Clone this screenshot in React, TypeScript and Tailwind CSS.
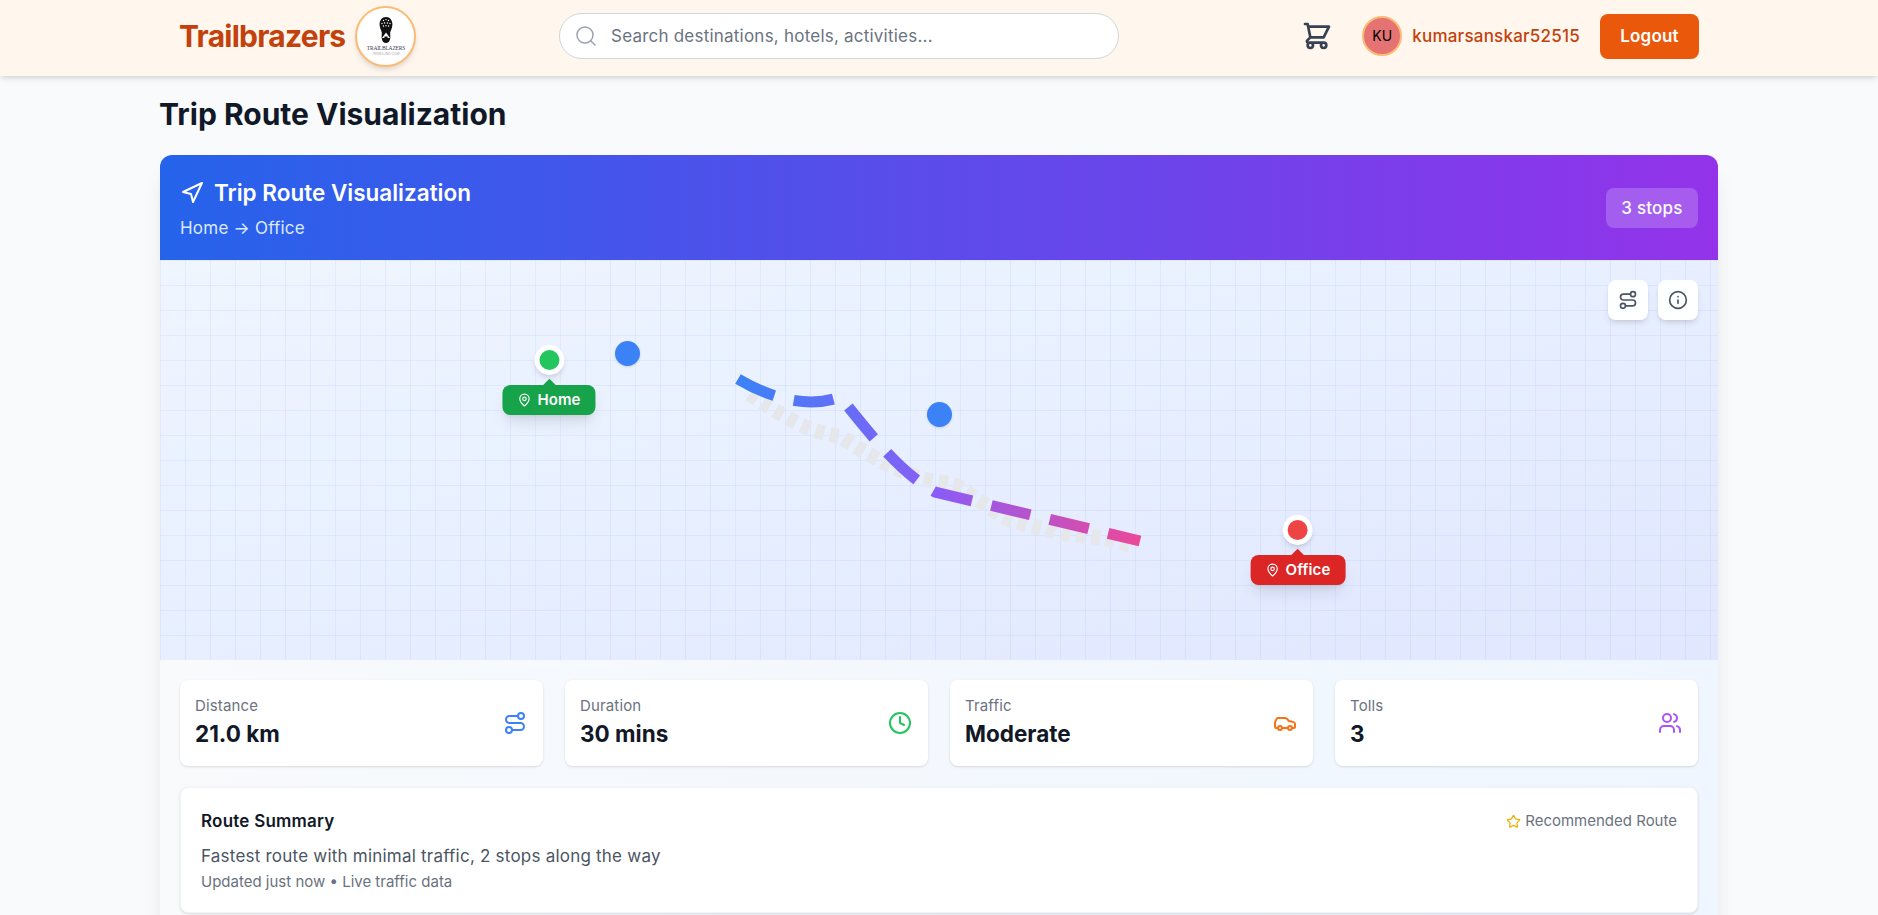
import { Car, Clock, Info, MapPin, Navigation, Route, Search, Star, Users } from "lucide-react";
import { HiOutlineShoppingCart } from "react-icons/hi";
import type { ReactNode } from "react";

const stats = [
  { label: "Distance", value: "21.0 km", icon: <Route size={24} className="text-[#3b82f6]" /> },
  { label: "Duration", value: "30 mins", icon: <Clock size={24} className="text-[#22c55e]" /> },
  { label: "Traffic", value: "Moderate", icon: <Car size={24} className="text-[#f97316]" /> },
  { label: "Tolls", value: "3", icon: <Users size={24} className="text-[#a855f7]" /> },
];

function BootLogo() {
  return (
    <svg width="14" height="26" viewBox="0 0 14 26" className="shrink-0">
      <path d="M7 0C11 0 13.6 3.5 13.4 8C13.2 11.5 11.6 13.5 11.2 15.5C11 17 11.6 19 11.2 21.5C10.8 24.5 9 26 7 26C5 26 3.2 24.5 2.8 21.5C2.4 19 3 17 2.8 15.5C2.4 13.5 .8 11.5 .6 8C.4 3.5 3 0 7 0Z" fill="#111" />
      <g fill="#fff">
        <circle cx="4.5" cy="3.5" r=".7" />
        <circle cx="7" cy="2.6" r=".7" />
        <circle cx="9.5" cy="3.5" r=".7" />
        <circle cx="3" cy="6.5" r=".7" />
        <circle cx="5.6" cy="6" r=".7" />
        <circle cx="8.4" cy="6" r=".7" />
        <circle cx="11" cy="6.5" r=".7" />
        <circle cx="4.4" cy="9" r=".7" />
        <circle cx="7" cy="8.8" r=".7" />
        <circle cx="9.6" cy="9" r=".7" />
        <path d="M7 15.5L11 21H8.6V19.6H5.4V21H3Z" />
      </g>
    </svg>
  );
}

function Pin({ label, className, dot, tone }: { label: string; className: string; dot: string; tone: string }) {
  return (
    <div className={`absolute flex -translate-x-1/2 flex-col items-center ${className}`}>
      <div className="flex h-[30px] w-[30px] items-center justify-center rounded-full bg-white shadow-md">
        <div className={`h-5 w-5 rounded-full ${dot}`} />
      </div>
      <div className={`relative mt-[10px] flex h-[30px] items-center gap-1.5 rounded-lg px-[15px] text-[15px] font-semibold tracking-[0.1px] text-white shadow-lg ${tone}`}>
        <div className={`absolute -top-[4px] left-1/2 h-[11px] w-[11px] -translate-x-1/2 rotate-45 ${tone}`} />
        <MapPin size={14} className="relative" />
        <span className="relative">{label}</span>
      </div>
    </div>
  );
}

function MapButton({ children }: { children: ReactNode }) {
  return (
    <button className="flex h-10 w-10 items-center justify-center rounded-lg bg-white/95 text-[#4b5563] shadow-md">
      {children}
    </button>
  );
}

function RouteLines() {
  return (
    <svg viewBox="0 0 1558 400" className="absolute inset-0 h-full w-full">
      <defs>
        <linearGradient id="routeGrad" gradientUnits="userSpaceOnUse" x1="578" y1="0" x2="980" y2="0">
          <stop offset="0" stopColor="#3b82f6" />
          <stop offset="0.5" stopColor="#8b5cf6" />
          <stop offset="1" stopColor="#ec4899" />
        </linearGradient>
      </defs>
      <path
        d="M590 134C605 145 630 160 650 169C665 174 672 175 680 176C700 190 730 208 763 219C772 221 785 222 795 225C805 230 830 250 850 260C865 265 880 267 896 272C910 275 930 277 943 278C950 280 960 283 970 285"
        fill="none"
        stroke="#e5e7eb"
        strokeWidth="15"
        strokeDasharray="9 6"
      />
      <path
        d="M578 119C605 135 645 150 680 137C700 160 735 210 775 232L980 281"
        fill="none"
        stroke="url(#routeGrad)"
        strokeWidth="11"
        strokeDasharray="40 20"
      />
    </svg>
  );
}

export default function App() {
  return (
    <div className="h-screen overflow-hidden bg-[#f9fafb] text-[17px] leading-6 tracking-[0.22px] [font-family:Inter,sans-serif]">
      <header className="relative z-10 flex h-[76px] items-center bg-[#fff7ed] pb-1 pl-[179px] pr-[179px] shadow-md">
        <div className="flex w-[380px] items-center gap-[10px]">
          <span className="text-[30px] font-bold tracking-[-0.75px] text-[#c2410c]">Trailbrazers</span>
          <div className="flex h-[61px] w-[61px] flex-col items-center justify-center rounded-full border-2 border-[#fdba74] bg-white shadow-md">
            <BootLogo />
            <span className="mt-[2px] text-[5.5px] leading-[7px] tracking-[-0.2px] text-[#374151] [font-family:'Liberation_Serif',serif]">TRAILBLAZERS</span>
            <span className="text-[3px] leading-[4px] tracking-normal text-[#9ca3af]">TRAVELLING CLUB</span>
          </div>
        </div>
        <div className="relative h-[46px] w-[560px]">
          <Search size={24} strokeWidth={1.5} className="absolute left-[15px] top-[11px] text-[#9ca3af]" />
          <input
            readOnly
            placeholder="Search destinations, hotels, activities..."
            className="h-full w-full rounded-full border border-[#d1d5db] bg-white pl-[51px] pr-4 outline-none placeholder:text-[#6b7280]"
          />
        </div>
        <div className="ml-auto flex items-center">
          <HiOutlineShoppingCart size={32} className="text-[#374151]" />
          <div className="ml-[29px] flex h-10 w-10 items-center justify-center rounded-full border-2 border-[#fdba74] bg-[#e57373] text-sm tracking-normal text-black">KU</div>
          <span className="ml-[10px] font-medium text-[#c2410c]">kumarsanskar52515</span>
          <button className="ml-5 h-[45px] w-[99px] rounded-lg bg-[#ea580c] font-semibold text-white">Logout</button>
        </div>
      </header>

      <main className="mx-auto max-w-[1558px] pt-5">
        <h1 className="-ml-px mb-[23px] text-3xl font-bold tracking-normal text-[#111827]">Trip Route Visualization</h1>

        <section className="overflow-hidden rounded-t-xl bg-white shadow-xl">
          <div className="flex h-[105px] items-center justify-between bg-[linear-gradient(to_right,#2563eb,#9333ea)] px-5 text-white">
            <div className="pt-px">
              <div className="flex items-center gap-2.5">
                <Navigation size={24} />
                <h2 className="text-[22.5px] font-semibold leading-8 tracking-normal">Trip Route Visualization</h2>
              </div>
              <p className="mt-[7px] text-[#dbeafe]">Home → Office</p>
            </div>
            <div className="flex h-10 w-[92px] items-center justify-center rounded-lg bg-white/20 font-medium">3 stops</div>
          </div>

          <div className="relative h-[400px] bg-[linear-gradient(to_bottom_right,#eff6ff,#e0e7ff)]">
            <div className="absolute inset-0 bg-[linear-gradient(to_right,rgba(59,130,246,0.08)_1px,transparent_1px),linear-gradient(to_bottom,rgba(59,130,246,0.08)_1px,transparent_1px)] bg-[size:25px_25px]" />
            <RouteLines />
            <div className="absolute left-[455px] top-[81px] h-[25px] w-[25px] rounded-full bg-[#3b82f6] shadow-sm" />
            <div className="absolute left-[767px] top-[142px] h-[25px] w-[25px] rounded-full bg-[#3b82f6] shadow-sm" />
            <Pin label="Home" className="left-[389px] top-[85px]" dot="bg-[#22c55e]" tone="bg-[#16a34a]" />
            <Pin label="Office" className="left-[1138px] top-[255px]" dot="bg-[#ef4444]" tone="bg-[#dc2626]" />
            <div className="absolute right-5 top-5 flex gap-2.5">
              <MapButton><Route size={20} /></MapButton>
              <MapButton><Info size={20} /></MapButton>
            </div>
          </div>

          <div className="bg-[linear-gradient(to_right,#f8fafc,#eff6ff)] p-5">
            <div className="mb-[21px] grid grid-cols-4 gap-[22px]">
              {stats.map((s) => (
                <div key={s.label} className="flex items-center justify-between rounded-lg bg-white pb-4 pl-[15px] pr-4 pt-4 shadow-sm">
                  <div>
                    <p className="text-[15px] leading-5 tracking-[0.15px] text-[#6b7280]">{s.label}</p>
                    <p className="mt-[2px] text-[22.5px] font-bold leading-8 tracking-normal text-[#111827]">{s.value}</p>
                  </div>
                  {s.icon}
                </div>
              ))}
            </div>
            <div className="rounded-lg border border-[#f3f4f6] bg-white px-5 pb-5 pt-[21px] shadow-sm">
              <div className="mb-[11px] flex items-center justify-between">
                <h3 className="font-semibold text-[#111827]">Route Summary</h3>
                <div className="flex items-center gap-1 text-[15px] tracking-normal text-[#6b7280]">
                  <Star size={15} className="text-[#eab308]" />
                  Recommended Route
                </div>
              </div>
              <p className="text-[#4b5563]">Fastest route with minimal traffic, 2 stops along the way</p>
              <p className="mt-1 text-[15px] leading-5 tracking-normal text-[#6b7280]">Updated just now • Live traffic data</p>
            </div>
          </div>
        </section>
      </main>
    </div>
  );
}
